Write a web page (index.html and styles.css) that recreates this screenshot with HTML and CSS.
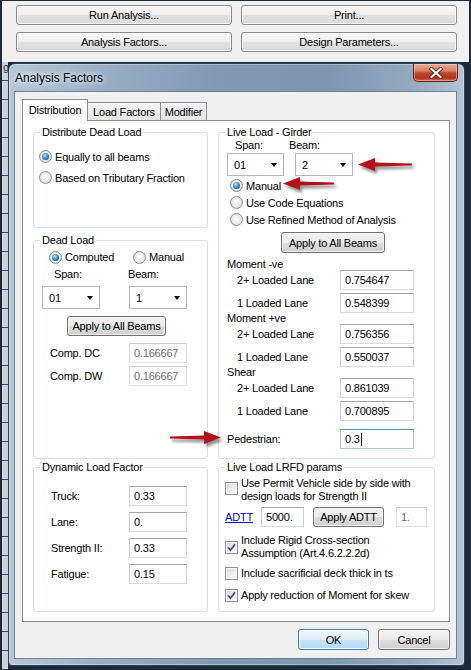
FILE: index.html
```html
<!DOCTYPE html>
<html>
<head>
<meta charset="utf-8">
<title>Analysis Factors</title>
<link rel="stylesheet" href="styles.css">
</head>
<body>
<div class="screen">
  <div class="panel">
    <button class="pbtn">Run Analysis...</button>
    <button class="pbtn">Print...</button>
    <button class="pbtn">Analysis Factors...</button>
    <button class="pbtn">Design Parameters...</button>
  </div>
  <div class="behind"><span class="behind-g">g</span></div>

  <div class="dialog">
    <div class="titlebar">
      <span class="title">Analysis Factors</span>
      <span class="close">
        <svg width="14" height="12" viewBox="0 0 14 12">
          <path d="M2.5 2 L11.5 10 M11.5 2 L2.5 10" stroke="#4a2018" stroke-width="4" stroke-linecap="square"/>
          <path d="M2.5 2 L11.5 10 M11.5 2 L2.5 10" stroke="#ffffff" stroke-width="2.2" stroke-linecap="square"/>
        </svg>
      </span>
    </div>
    <div class="client">
      <div class="tabs">
        <div class="tab active">Distribution</div>
        <div class="tab t-load">Load Factors</div>
        <div class="tab t-mod">Modifier</div>
      </div>
      <div class="page">
        <div class="left-top">
          <fieldset class="fs fs-dist">
            <legend>Distribute Dead Load</legend>
            <div class="dist-body">
              <label class="radio checked"><span class="rb"></span>Equally to all beams</label>
              <label class="radio"><span class="rb"></span>Based on Tributary Fraction</label>
            </div>
          </fieldset>
          <fieldset class="fs fs-dead">
            <legend>Dead Load</legend>
            <div class="dl-radios">
              <label class="radio checked"><span class="rb"></span>Computed</label>
              <label class="radio"><span class="rb"></span>Manual</label>
            </div>
            <div class="dl-labels"><span>Span:</span><span>Beam:</span></div>
            <div class="dl-combos">
              <div class="combo">01<i class="caret"></i></div>
              <div class="combo">1<i class="caret"></i></div>
            </div>
            <button class="btn dl-apply">Apply to All Beams</button>
            <div class="dl-row"><span>Comp. DC</span><span class="tb disabled">0.166667</span></div>
            <div class="dl-row"><span>Comp. DW</span><span class="tb disabled">0.166667</span></div>
          </fieldset>
        </div>

        <fieldset class="fs fs-live">
          <legend>Live Load - Girder</legend>
          <div class="ll-labels"><span>Span:</span><span>Beam:</span></div>
          <div class="ll-combos">
            <div class="combo">01<i class="caret"></i></div>
            <div class="combo">2<i class="caret"></i></div>
          </div>
          <div class="ll-radios">
            <label class="radio checked"><span class="rb"></span>Manual</label>
            <label class="radio"><span class="rb"></span>Use Code Equations</label>
            <label class="radio"><span class="rb"></span>Use Refined Method of Analysis</label>
          </div>
          <button class="btn ll-apply">Apply to All Beams</button>
          <div class="ll-head">Moment -ve</div>
          <div class="ll-row"><span>2+ Loaded Lane</span><span class="tb">0.754647</span></div>
          <div class="ll-row"><span>1 Loaded Lane</span><span class="tb">0.548399</span></div>
          <div class="ll-head">Moment +ve</div>
          <div class="ll-row"><span>2+ Loaded Lane</span><span class="tb">0.756356</span></div>
          <div class="ll-row"><span>1 Loaded Lane</span><span class="tb">0.550037</span></div>
          <div class="ll-head">Shear</div>
          <div class="ll-row"><span>2+ Loaded Lane</span><span class="tb">0.861039</span></div>
          <div class="ll-row"><span>1 Loaded Lane</span><span class="tb">0.700895</span></div>
          <div class="ll-ped"><span>Pedestrian:</span><span class="tb focus">0.3<i class="cursor"></i></span></div>
        </fieldset>

        <fieldset class="fs fs-dyn">
          <legend>Dynamic Load Factor</legend>
          <div class="dy-row"><span>Truck:</span><span class="tb">0.33</span></div>
          <div class="dy-row"><span>Lane:</span><span class="tb">0.</span></div>
          <div class="dy-row"><span>Strength II:</span><span class="tb">0.33</span></div>
          <div class="dy-row"><span>Fatigue:</span><span class="tb">0.15</span></div>
        </fieldset>

        <fieldset class="fs fs-lrfd">
          <legend>Live Load LRFD params</legend>
          <div class="ck-row r1"><span class="cb"></span><span class="cktext">Use Permit Vehicle side by side with<br>design loads for Strength II</span></div>
          <div class="adtt-row">
            <a class="link">ADTT</a>
            <span class="tb tb-adtt">5000.</span>
            <button class="btn btn-adtt">Apply ADTT</button>
            <span class="tb disabled tb-one">1.</span>
          </div>
          <div class="ck-row r2"><span class="cb on"><svg width="9" height="9" viewBox="0 0 9 9"><path d="M1 4.5 L3.5 7.2 L8 1.2" fill="none" stroke="#3b4f8a" stroke-width="1.8"/></svg></span><span class="cktext">Include Rigid Cross-section<br>Assumption (Art.4.6.2.2.2d)</span></div>
          <div class="ck-row r3"><span class="cb"></span><span class="cktext">Include sacrificial deck thick in ts</span></div>
          <div class="ck-row r4"><span class="cb on"><svg width="9" height="9" viewBox="0 0 9 9"><path d="M1 4.5 L3.5 7.2 L8 1.2" fill="none" stroke="#3b4f8a" stroke-width="1.8"/></svg></span><span class="cktext">Apply reduction of Moment for skew</span></div>
        </fieldset>
      </div>
      <div class="actions">
        <button class="btn btn-ok">OK</button>
        <button class="btn btn-cancel">Cancel</button>
      </div>
    </div>
  </div>

  <svg class="arrow a-beam" width="56" height="16" viewBox="0 0 56 16">
    <path d="M0 6.5 L17 0 L17 4.6 L54 5.6 L54 7.4 L17 8.4 L17 13 Z" fill="#b3121b"/>
  </svg>
  <svg class="arrow a-manual" width="53" height="16" viewBox="0 0 53 16">
    <path d="M0 6.5 L17 0 L17 4.6 L51 5.6 L51 7.4 L17 8.4 L17 13 Z" fill="#b3121b"/>
  </svg>
  <svg class="arrow a-ped" width="53" height="16" viewBox="0 0 53 16">
    <path d="M51 6.5 L34 0 L34 4.6 L0 5.6 L0 7.4 L34 8.4 L34 13 Z" fill="#b3121b"/>
  </svg>
</div>
</body>
</html>
```

FILE: styles.css
```css
* { box-sizing: border-box; }
html, body { margin: 0; padding: 0; }
body {
  background: #1b2a3d;
  font-family: "Liberation Sans", Arial, sans-serif;
  font-size: 11px;
  letter-spacing: -0.2px;
  color: #000;
}
.screen {
  position: relative;
  width: 471px;
  height: 670px;
  overflow: hidden;
  background: #1b2a3d;
  padding: 1px 2px 0 2px;
}

/* background application panel */
.panel {
  height: 61px;
  background: #f0f0f0;
  display: grid;
  grid-template-columns: 216px 216px;
  column-gap: 9px;
  row-gap: 7px;
  align-content: start;
  padding: 4px 0 0 14px;
}
.pbtn {
  height: 20px;
  font: inherit;
  letter-spacing: -0.2px;
  border: 1px solid #8a8a8a;
  border-radius: 3px;
  background: linear-gradient(#f6f6f6 0%, #eeeeee 50%, #e2e2e2 51%, #d9d9d9 100%);
  box-shadow: inset 0 0 0 1px rgba(255,255,255,0.7);
  padding: 0;
  color: #000;
}
.behind {
  height: 608px;
  width: 6px;
  background:
    repeating-linear-gradient(to bottom, transparent 0, transparent 18px, #3b4a60 18px, #3b4a60 19px),
    #cdd3da;
  padding-top: 0;
  overflow: hidden;
}
.behind-g { display: block; line-height: 10px; font-size: 11px; margin-left: 1px; color: #333; }

/* dialog window */
.dialog {
  position: absolute;
  left: 8px;
  top: 63px;
  width: 457px;
  height: 603px;
  border: 1px solid #2e4157;
  border-radius: 7px 7px 4px 4px;
  background: linear-gradient(90deg, #b7c7d7 0%, #9bb0c6 18%, #8199b2 45%, #7d96ae 70%, #92a8bf 88%, #b3c4d5 100%);
  box-shadow: inset 0 0 0 1px rgba(255,255,255,0.35);
  padding: 0 7px 6px 5px;
  display: flex;
  flex-direction: column;
}
.titlebar {
  height: 27px;
  display: flex;
  align-items: center;
  padding-left: 1px;
}
.title {
  font-size: 12px;
  letter-spacing: 0;
  color: #000;
  text-shadow: 0 0 8px #fff, 0 0 4px rgba(255,255,255,0.9);
}
.close {
  align-self: flex-start;
  margin-left: auto;
  margin-right: -1px;
  width: 45px;
  height: 18px;
  border: 1px solid #5a2218;
  border-top: none;
  border-radius: 0 0 5px 5px;
  background: linear-gradient(#e9aa98 0%, #d98068 40%, #c3472d 52%, #b3321d 80%, #cf6a4f 100%);
  box-shadow: inset 0 0 0 1px rgba(255,220,200,0.45);
  display: flex;
  align-items: center;
  justify-content: center;
}
.client {
  flex: 1;
  background: #f0f0f0;
  border: 1px solid #6d8197;
  padding: 7px 6px 0 7px;
  display: flex;
  flex-direction: column;
}

/* tabs */
.tabs {
  display: flex;
  align-items: flex-end;
  height: 21px;
}
.tab {
  height: 18px;
  border: 1px solid #898c95;
  border-bottom: none;
  background: linear-gradient(#f4f4f4, #e4e4e4);
  text-align: center;
  line-height: 18px;
}
.tab.active {
  width: 66px;
  height: 22px;
  margin-bottom: -1px;
  background: #fff;
  line-height: 20px;
  position: relative;
  z-index: 1;
}
.t-load { width: 73px; border-left: none; }
.t-mod { width: 46px; border-left: none; }

.page {
  height: 502px;
  background: #fff;
  border: 1px solid #898c95;
  padding: 5px 0 0 10px;
  display: grid;
  grid-template-columns: 175px 217px;
  grid-template-rows: 333px 151px;
  column-gap: 10px;
  row-gap: 2px;
}
.left-top {
  display: flex;
  flex-direction: column;
  gap: 6px;
}

/* group boxes */
.fs {
  margin: 0;
  padding: 0;
  min-width: 0;
  border: 1px solid #d5dfe5;
  border-radius: 3px;
}
.fs legend {
  padding: 0 2px;
  margin-left: 6px;
  line-height: 13px;
  font-size: 11px;
}
.fs-dist { height: 102px; }
.fs-dead { height: 225px; }
.fs-live { height: 333px; }
.fs-dyn, .fs-lrfd { height: 151px; }

/* radio buttons */
.radio {
  display: flex;
  align-items: center;
  gap: 3px;
  white-space: nowrap;
}
.rb {
  width: 13px;
  height: 13px;
  flex: none;
  border-radius: 50%;
  border: 1px solid #8b8b8b;
  background: radial-gradient(circle at 50% 45%, #ffffff 0%, #ececec 45%, #cdcdcd 100%);
  display: flex;
  align-items: center;
  justify-content: center;
}
.checked .rb::after {
  content: "";
  width: 7px;
  height: 7px;
  border-radius: 50%;
  background: radial-gradient(circle at 40% 35%, #c2ecff 0%, #4aa6e0 35%, #1a5f9e 75%, #0d3b6b 100%);
}

/* checkboxes */
.cb {
  width: 13px;
  height: 13px;
  flex: none;
  border: 1px solid #8e8f8f;
  background: linear-gradient(135deg, #d6d6d6 0%, #f0f0f0 60%, #fcfcfc 100%);
  box-shadow: inset 0 0 0 1px #f6f6f6;
  display: flex;
  align-items: center;
  justify-content: center;
}

/* text boxes and combos */
.tb {
  height: 20px;
  background: #fff;
  border: 1px solid;
  border-color: #a4a6ab #cdd0d5 #d7dadf #cdd0d5;
  padding: 0 4px;
  display: flex;
  align-items: center;
  white-space: nowrap;
}
.tb.disabled {
  color: #6d6d6d;
  border-color: #c9cbcf #dadcdf #dfe1e4 #dadcdf;
}
.tb.focus { border-color: #5a8fc2 #9fc1e2 #a9c7e5 #9fc1e2; }
.cursor {
  display: inline-block;
  width: 1px;
  height: 13px;
  background: #000;
  margin-left: 1px;
}
.combo {
  height: 23px;
  background: #fff;
  border: 1px solid #b6b6b6;
  display: flex;
  align-items: center;
  justify-content: space-between;
  padding: 0 4px 0 6px;
}
.caret {
  width: 0;
  height: 0;
  border-left: 3.5px solid transparent;
  border-right: 3.5px solid transparent;
  border-top: 4px solid #000;
  margin-right: 2px;
}

/* push buttons */
.btn {
  display: block;
  height: 20px;
  padding: 0;
  font: inherit;
  letter-spacing: -0.2px;
  color: #000;
  border: 1px solid #707070;
  border-radius: 3px;
  background: linear-gradient(#f2f2f2 0%, #ebebeb 50%, #dddddd 51%, #cfcfcf 100%);
  box-shadow: inset 0 0 0 1px rgba(255,255,255,0.65);
}

/* Distribute Dead Load */
.dist-body { padding: 7px 0 0 5px; }
.dist-body .radio { height: 21px; }

/* Dead Load */
.dl-radios {
  display: grid;
  grid-template-columns: 84px auto;
  padding-left: 15px;
  margin-top: 3px;
}
.dl-radios .radio { height: 14px; }
.dl-labels {
  display: grid;
  grid-template-columns: 74px auto;
  padding-left: 20px;
  line-height: 12px;
  margin-top: 4px;
}
.dl-combos {
  display: grid;
  grid-template-columns: 58px 58px;
  column-gap: 29px;
  padding-left: 8px;
  margin-top: 6px;
}
.dl-apply { width: 99px; margin: 7px 0 0 33px; }
.dl-row {
  display: grid;
  grid-template-columns: 79px 58px;
  align-items: center;
  padding-left: 16px;
  height: 20px;
  margin-top: 3px;
}
.dl-apply + .dl-row { margin-top: 7px; }

/* Live Load - Girder */
.ll-labels {
  display: grid;
  grid-template-columns: 54px auto;
  padding-left: 16px;
  line-height: 12px;
}
.ll-combos {
  display: grid;
  grid-template-columns: 57px 58px;
  column-gap: 11px;
  padding-left: 8px;
  margin-top: 2px;
}
.ll-radios { padding-left: 11px; margin-top: 1px; }
.ll-radios .radio { height: 17px; }
.ll-apply { width: 104px; height: 21px; margin: 4px 0 0 62px; }
.ll-head { padding-left: 8px; line-height: 11px; }
.ll-apply + .ll-head { margin-top: 6px; }
.ll-row {
  display: grid;
  grid-template-columns: 103px 74px;
  align-items: center;
  height: 20px;
  padding-left: 18px;
}
.ll-row + .ll-row { margin-top: 3px; }
.ll-ped {
  display: grid;
  grid-template-columns: 113px 74px;
  align-items: center;
  height: 20px;
  padding-left: 8px;
  margin-top: 8px;
}

/* Dynamic Load Factor */
.dy-row {
  display: grid;
  grid-template-columns: 78px 58px;
  align-items: center;
  height: 20px;
  padding-left: 17px;
  margin-top: 6px;
}
.fs-dyn legend + .dy-row { margin-top: 12px; }

/* Live Load LRFD params */
.ck-row {
  display: flex;
  align-items: center;
  gap: 3px;
  padding-left: 6px;
  line-height: 13px;
  white-space: nowrap;
}
.ck-row.r1 { margin-top: 3px; }
.ck-row.r2 { margin-top: 7px; }
.ck-row.r3 { margin-top: 7px; }
.ck-row.r4 { margin-top: 9px; }
.ck-row.r1 .cb { align-self: flex-start; margin-top: 5px; }
.adtt-row {
  display: flex;
  align-items: center;
  padding-left: 6px;
  margin-top: 4px;
  height: 20px;
}
.link {
  width: 36px;
  color: #0000ee;
  text-decoration: underline;
}
.tb-adtt { width: 43px; }
.btn-adtt { width: 71px; margin-left: 9px; }
.tb-one { width: 31px; margin-left: 12px; }

/* dialog buttons */
.actions {
  display: flex;
  justify-content: flex-end;
  gap: 9px;
  margin-top: 7px;
}
.btn-ok, .btn-cancel { height: 21px; }
.btn-ok {
  width: 71px;
  border-color: #3c7fb1;
  background: linear-gradient(#eef7fd 0%, #dcedf8 50%, #c6e2f5 51%, #b5d8ee 100%);
  box-shadow: inset 0 0 0 1px rgba(255,255,255,0.8);
}
.btn-cancel { width: 72px; }

/* annotation arrows laid over the screenshot */
.arrow {
  position: absolute;
  filter: drop-shadow(2px 3px 1.5px rgba(0,0,0,0.45));
}
.a-beam { left: 358px; top: 158px; }
.a-manual { left: 283px; top: 177px; }
.a-ped { left: 170px; top: 431px; }
```
